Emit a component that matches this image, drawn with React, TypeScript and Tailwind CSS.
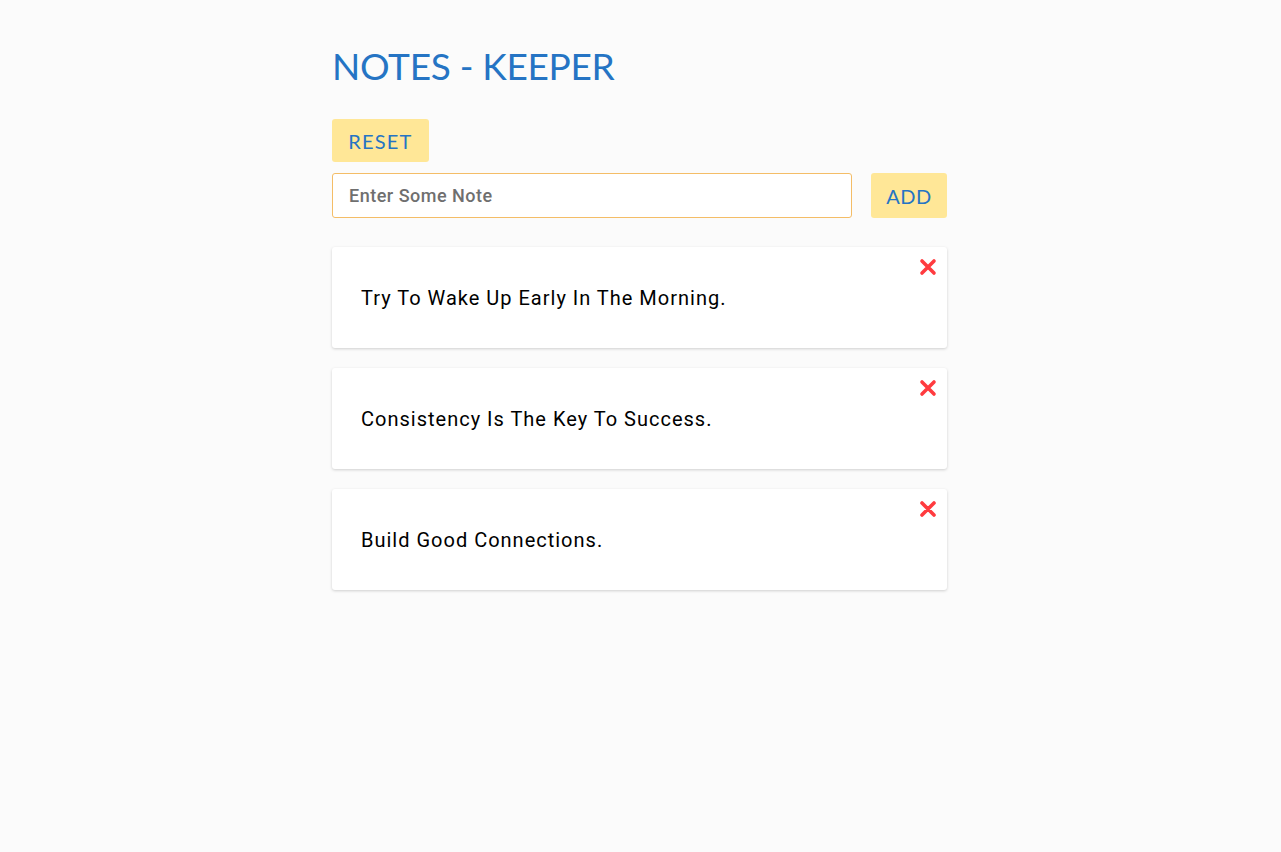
import { useState } from "react";

const initialNotes = [
  "Try To Wake Up Early In The Morning.",
  "Consistency Is The Key To Success.",
  "Build Good Connections.",
];

function CloseIcon() {
  return (
    <svg width="18" height="18" viewBox="0 0 18 18" fill="none">
      <path
        d="M3 3L15 15M15 3L3 15"
        stroke="#ff3b3f"
        strokeWidth="3.6"
        strokeLinecap="round"
      />
    </svg>
  );
}

export default function App() {
  const [notes, setNotes] = useState(initialNotes);
  const [text, setText] = useState("");

  function addNote() {
    if (!text.trim()) return;
    setNotes([...notes, text]);
    setText("");
  }

  return (
    <div className="min-h-[852px] w-full bg-[#fbfbfb] flex justify-center font-['Roboto',sans-serif]">
      <div className="w-[615px] mr-[2px] pt-[44px]">
        <h1 className="text-[#2574c4] text-[37px] leading-[44px] font-['Lato',sans-serif] tracking-[-0.3px]">
          NOTES - KEEPER
        </h1>
        <button
          onClick={() => setNotes([])}
          className="mt-[31px] h-[43px] w-[97px] rounded-[3px] bg-[#ffe797] text-[#2574c4] text-[20px] font-['Lato',sans-serif] tracking-[1.2px]"
        >
          RESET
        </button>
        <div className="mt-[11px] flex gap-[19px]">
          <input
            value={text}
            onChange={(e) => setText(e.target.value)}
            placeholder="Enter Some Note"
            className="h-[45px] w-[520px] rounded-[3px] border border-[#f4bd67] bg-white px-[16px] text-[18px] font-medium tracking-[0.5px] text-[#444] placeholder:text-[#6f6f6f] outline-none"
          />
          <button
            onClick={addNote}
            className="h-[45px] w-[76px] rounded-[3px] bg-[#ffe797] text-[#2574c4] text-[20px] font-['Lato',sans-serif] tracking-[0.5px]"
          >
            ADD
          </button>
        </div>
        <div className="mt-[29px] flex flex-col gap-[20px]">
          {notes.map((note, i) => (
            <div
              key={i}
              className="relative h-[101px] rounded-[3px] bg-white shadow-[0_1px_3px_rgba(0,0,0,0.18)] flex items-center px-[29px]"
            >
              <p className="text-[20px] text-black tracking-[1px]">{note}</p>
              <button
                onClick={() => setNotes(notes.filter((_, j) => j !== i))}
                className="absolute right-[10px] top-[11px]"
              >
                <CloseIcon />
              </button>
            </div>
          ))}
        </div>
      </div>
    </div>
  );
}
